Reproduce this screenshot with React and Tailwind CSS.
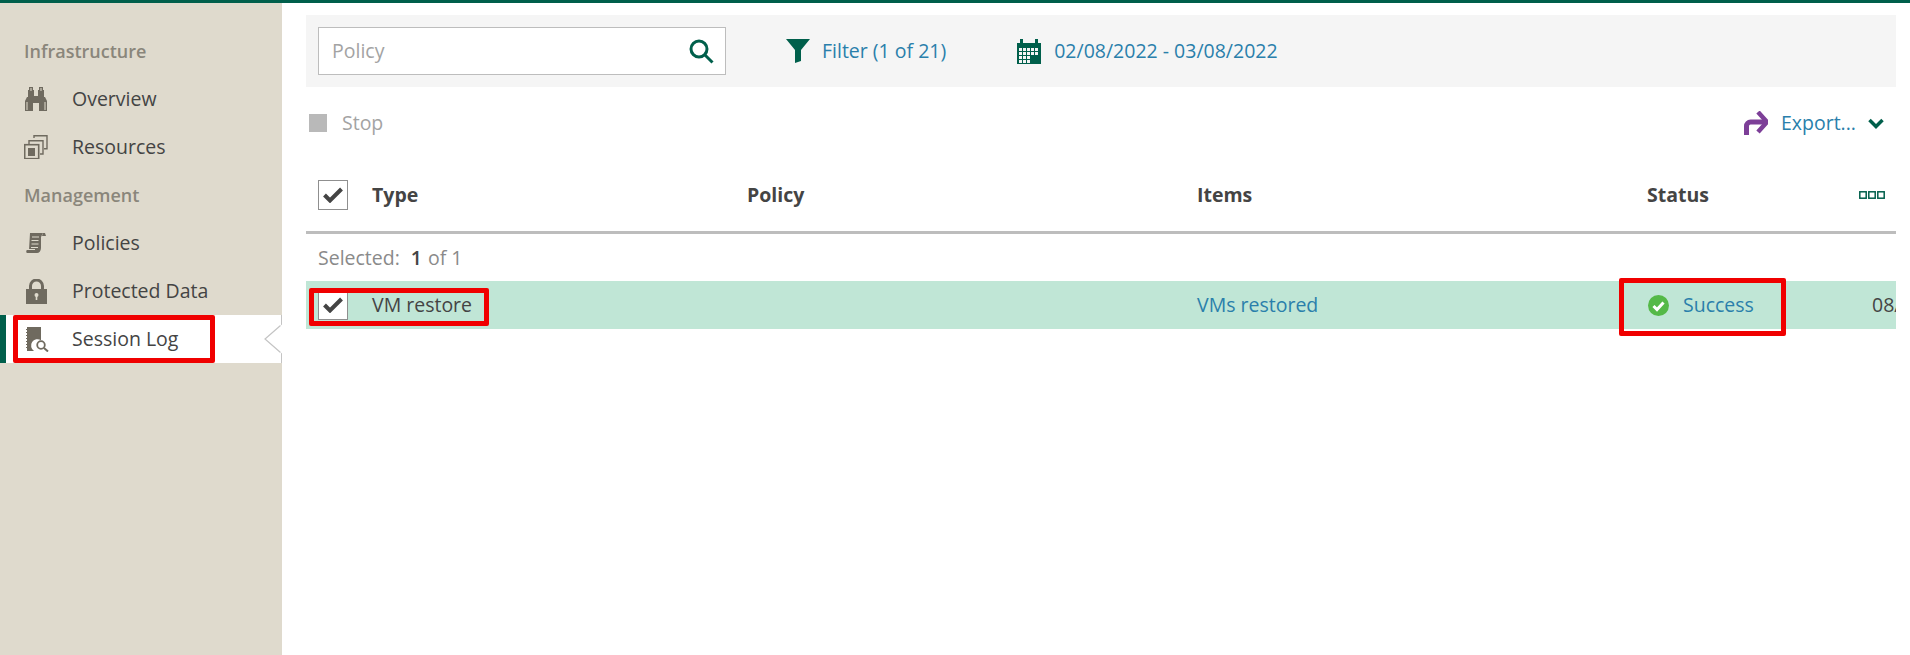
import React from "react";

const Binoculars = () => (
  <svg width="24" height="24" viewBox="0 0 24 24" fill="#6f6a5f">
    <path d="M5 0h4v3h1v6h4V3h1V0h4v3h1v7h1l2 4v10h-8v-8h-6v8H1V14l2-4h1V3h1z" />
    <rect x="2" y="15" width="2" height="8" fill="#a8a396" />
    <rect x="20" y="15" width="2" height="8" fill="#a8a396" />
    <rect x="6" y="1" width="2" height="3" fill="#a8a396" />
    <rect x="16" y="1" width="2" height="3" fill="#a8a396" />
  </svg>
);
const Resources = () => (
  <svg width="24" height="24" viewBox="0 0 24 24" fill="none" stroke="#6f6a5f" strokeWidth="1.4">
    <path d="M10 3V.7h13v13h-3" />
    <path d="M5 9V5.700h14V19h-3" />
    <rect x=".7" y="9.700" width="14" height="14" strokeWidth="1.600" />
    <rect x="4" y="13" width="7" height="8" fill="#6f6a5f" stroke="none" />
  </svg>
);
const Scroll = () => (
  <svg width="20" height="20" viewBox="0 0 20 20" fill="#6f6a5f">
    <path d="M4 0h13l-2 4v11c0 3-2 5-4 5H1c-1 0-1-3 0-3h2z" />
    <path d="M17 0h2l1 3h-4z" />
    <g stroke="#dfdacd" strokeWidth="1"><path d="M6 4h7M5.500 7.500h7M5.500 11h7M5 14.500h7M1 16.500h8" /></g>
  </svg>
);
const Lock = () => (
  <svg width="21" height="25" viewBox="0 0 21 25" fill="#6f6a5f">
    <path fillRule="evenodd" d="M0 10h3V7a7.500 7.500 0 0 1 15 0v3h3v15H0zM6 10h9V7a4.500 4.500 0 0 0-9 0z" />
    <circle cx="10.500" cy="16" r="2" fill="#dfdacd" />
    <rect x="9.700" y="16" width="1.600" height="5" fill="#dfdacd" />
  </svg>
);
const SessionIcon = () => (
  <svg width="23" height="25" viewBox="0 0 23 25">
    <path d="M1 0h14v13.200a6 6 0 0 0-7 10.800H1z" fill="#6f6a5f" />
    <path d="M0 2.500h1M0 5.500h1M0 8.500h1M0 11.500h1M0 14.500h1M0 17.500h1M0 20.500h1" stroke="#6f6a5f" strokeWidth="1.200" />
    <circle cx="15" cy="18" r="3.800" fill="none" stroke="#6f6a5f" strokeWidth="1.800" />
    <path d="M18 21l4 3.500" stroke="#6f6a5f" strokeWidth="2" />
  </svg>
);
const Check = () => (
  <svg width="20" height="16" viewBox="0 0 20 16" fill="none" stroke="#444444" strokeWidth="4">
    <path d="M1.500 8l5.500 5.500L18.500 2" />
  </svg>
);
const Checkbox = () => (
  <div className="w-[30px] h-[30px] border border-[#8f8f8f] bg-white flex items-center justify-center shrink-0">
    <Check />
  </div>
);

const NavRow = ({ icon, label, active }) => (
  <div className={`relative h-12 flex items-center ${active ? "bg-white border-r border-[#c4c4c4]" : ""}`}>
    {active && <div className="w-[6px] h-full bg-[#005f4b]" />}
    <div className={`${active ? "w-[18px]" : "w-6"}`} />
    <div className="w-[48px] flex items-center shrink-0">{icon}</div>
    <span className="text-[#444444]">{label}</span>
    {active && (
      <>
        <svg className="absolute right-[-1px] top-[8px]" width="18" height="32" viewBox="0 0 18 32">
          <path d="M18 1.500L1 16l17 14.500z" fill="#ffffff" />
          <path d="M16.500 2.500L1 16l15.500 13.500" fill="none" stroke="#c4c4c4" strokeWidth="1.200" />
        </svg>
        <div className="absolute left-[13px] top-0 w-[202px] h-12 border-[5px] border-[#f00000] rounded-[2px]" />
      </>
    )}
  </div>
);

const Heading = ({ children }) => (
  <div className="h-12 flex items-center pl-6 text-[18px] font-semibold text-[#8a867b]">{children}</div>
);

export default function App() {
  return (
    <div className="w-[1910px] h-[655px] overflow-hidden bg-white flex flex-col text-[19.500px] font-['Open_Sans','Noto_Sans',sans-serif]">
      <div className="h-[3px] bg-[#005f4b] shrink-0" />
      <div className="flex flex-1 min-h-0">
        <aside className="w-[282px] shrink-0 bg-[#dfdacd] pt-6">
          <Heading>Infrastructure</Heading>
          <NavRow icon={<Binoculars />} label="Overview" />
          <NavRow icon={<Resources />} label="Resources" />
          <Heading>Management</Heading>
          <NavRow icon={<div className="pl-[2px]"><Scroll /></div>} label="Policies" />
          <NavRow icon={<div className="pl-[2px]"><Lock /></div>} label="Protected Data" />
          <NavRow icon={<div className="pl-[2px]"><SessionIcon /></div>} label="Session Log" active />
        </aside>

        <main className="flex-1 min-w-0 pl-6 pr-[14px] pt-3">
          <div className="h-[72px] bg-[#f5f5f5] flex items-center pl-3">
            <div className="w-[408px] h-12 bg-white border border-[#bdbdbd] flex items-center justify-between pl-[13px] pr-[11px]">
              <span className="text-[#a3a3a3]">Policy</span>
              <svg width="25" height="25" viewBox="0 0 25 25" fill="none" stroke="#005f4b" strokeWidth="3">
                <circle cx="10" cy="10" r="8" />
                <path d="M15.500 15.500l8 8" />
              </svg>
            </div>
            <svg className="ml-[60px]" width="24" height="24" viewBox="0 0 24 24" fill="#005f4b">
              <path d="M0 0h24L15 11v11l-6 2V11z" />
            </svg>
            <span className="ml-3 text-[#2a7fab]">Filter (1 of 21)</span>
            <svg className="ml-[71px]" width="24" height="25" viewBox="0 0 24 25">
              <rect x="0" y="4" width="24" height="21" fill="#005f4b" />
              <rect x="3" y="0" width="3" height="6" fill="#005f4b" />
              <rect x="18" y="0" width="3" height="6" fill="#005f4b" />
              <g fill="#f5f5f5">
                {[9, 13, 17, 21].map((y) =>
                  [2, 6, 10, 14, 18].map((x) =>
                    y >= 17 && x >= 14 ? null : <rect key={`${x}-${y}`} x={x} y={y} width="3" height="3" />
                  )
                )}
              </g>
            </svg>
            <span className="ml-[13px] text-[#2a7fab]">02/08/2022 - 03/08/2022</span>
          </div>

          <div className="h-[72px] flex items-center justify-between pl-[3px] pr-[12px]">
            <div className="flex items-center">
              <div className="w-[18px] h-[18px] bg-[#b9b9b9]" />
              <span className="ml-[15px] text-[#a3a3a3]">Stop</span>
            </div>
            <div className="flex items-center">
              <svg width="24" height="24" viewBox="0 0 24 24" fill="none" stroke="#7d3f98" strokeWidth="5">
                <path d="M2.500 24V15a4 4 0 0 1 4-4H20" />
                <path d="M14 1l9 10-9 10" fill="none" strokeWidth="4.500" />
              </svg>
              <span className="ml-[13px] text-[#2a7fab]">Export...</span>
              <svg className="ml-3" width="16" height="11" viewBox="0 0 16 11" fill="none" stroke="#005f4b" strokeWidth="3.500">
                <path d="M1.500 2l6.500 6.500L14.500 2" />
              </svg>
            </div>
          </div>

          <div className="h-[75px] flex items-center border-b-[3px] border-[#bdbdbd] pl-3 font-bold text-[#444444]">
            <div className="w-[54px] shrink-0"><Checkbox /></div>
            <div className="w-[375px] shrink-0">Type</div>
            <div className="w-[450px] shrink-0">Policy</div>
            <div className="w-[450px] shrink-0">Items</div>
            <div className="flex-1">Status</div>
            <svg className="mr-[11px]" width="26" height="8" viewBox="0 0 26 8" fill="none" stroke="#005f4b" strokeWidth="1.500">
              <rect x=".8" y=".8" width="6.400" height="6.400" />
              <rect x="9.800" y=".8" width="6.400" height="6.400" />
              <rect x="18.800" y=".8" width="6.400" height="6.400" />
            </svg>
          </div>

          <div className="h-[47px] flex items-center pl-3 text-[#8a8a8a]">
            Selected:<span className="ml-[11px] font-semibold text-[#444444]">1</span><span className="ml-[6px]">of 1</span>
          </div>

          <div className="relative h-12 bg-[#c0e6d6] flex items-center pl-3 text-[#444444]">
            <div className="w-[54px] shrink-0"><Checkbox /></div>
            <div className="w-[375px] shrink-0">VM restore</div>
            <div className="w-[450px] shrink-0" />
            <div className="w-[450px] shrink-0 text-[#2a7fab]">VMs restored</div>
            <div className="w-[225px] shrink-0 flex items-center pl-[1px]">
              <svg width="21" height="21" viewBox="0 0 21 21">
                <circle cx="10.500" cy="10.500" r="10.500" fill="#54b948" />
                <path d="M5.500 11l3.500 3.500 6.500-7" fill="none" stroke="#ffffff" strokeWidth="3" />
              </svg>
              <span className="ml-[14px] text-[#2a7fab]">Success</span>
            </div>
            <div className="w-[24px] overflow-hidden whitespace-nowrap shrink-0">08/02/2022</div>
            <div className="absolute left-[3px] top-[7px] w-[180px] h-[38px] border-[5px] border-[#f00000] rounded-[2px]" />
            <div className="absolute left-[1313px] top-[-3px] w-[167px] h-[58px] border-[5px] border-[#f00000] rounded-[2px]" />
          </div>
        </main>
      </div>
    </div>
  );
}
